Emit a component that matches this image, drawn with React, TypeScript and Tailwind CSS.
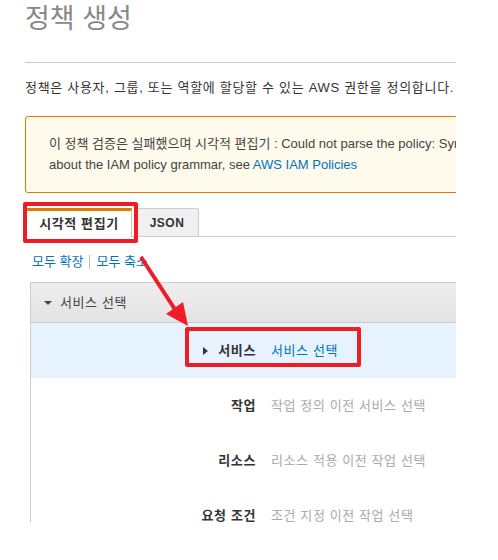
const font = { fontFamily: '"Liberation Sans", "Noto Sans CJK KR", sans-serif' };

const rows = [
  { label: "작업", value: "작업 정의 이전 서비스 선택" },
  { label: "리소스", value: "리소스 적용 이전 작업 선택" },
  { label: "요청 조건", value: "조건 지정 이전 작업 선택" },
];

export default function App() {
  return (
    <div className="w-[498px] h-[560px] bg-white" style={font}>
      <div className="relative w-[456px] h-[522px] overflow-hidden">
        <div className="w-[900px] pl-[25px]">
          <h1 className="h-[38px] text-[27px] leading-[38px] text-[#888] font-normal">정책 생성</h1>
          <div className="mt-[24px] w-[431px] border-t border-[#cccccc]" />
          <p className="mt-[15px] h-[20px] text-[13px] tracking-[0.7px] leading-[20px] text-[#333] whitespace-nowrap">
            정책은 사용자, 그룹, 또는 역할에 할당할 수 있는 AWS 권한을 정의합니다. 사용자, 그룹, 또는 역할에 정책을 연결하십시오.
          </p>

          <div className="mt-[18px] h-[77px] rounded-[3px] border border-[#e07b00] bg-[#fffbec] pl-[23px] pt-[16px] text-[13px] leading-[21px] text-[#444]">
            <div className="whitespace-nowrap">
              이 정책 검증은 실패했으며 시각적 편집기 : Could not parse the policy: Syntax errors in policy. For more information
            </div>
            <div className="whitespace-nowrap">
              about the IAM policy grammar, see <span className="text-[#0073bb]">AWS IAM Policies</span>
            </div>
          </div>

          <div className="mt-[15px] flex h-[29px] items-end border-b border-[#cccccc] pl-[1px]">
            <div className="relative -mb-px flex h-[29px] w-[106px] items-center justify-center border-x border-t-[3px] border-[#cccccc] border-t-[#e07b00] bg-white text-[13px] tracking-[0.6px] font-bold text-[#333]">
              시각적 편집기
            </div>
            <div className="ml-[3px] flex h-[28px] w-[64px] items-center justify-center rounded-t-[3px] border-x border-t border-[#cccccc] bg-[#f0f0f0] text-[12px] font-bold tracking-[0.5px] text-[#333]">
              JSON
            </div>
          </div>

          <div className="mt-[15px] flex h-[20px] items-center pl-[7px] text-[13px] leading-[20px]">
            <span className="text-[#0073bb]">모두 확장</span>
            <span className="mx-[6px] h-[14px] border-l border-[#bbbbbb]" />
            <span className="text-[#0073bb]">모두 축소</span>
          </div>

          <div className="ml-[5px] mt-[10px] border border-[#cccccc] w-[600px] h-[300px]">
            <div className="flex h-[40px] items-center border-b border-[#cccccc] bg-gradient-to-b from-[#eeeeee] to-[#e3e3e3] pl-[13px] text-[13px] tracking-[0.6px] text-[#444]">
              <span className="mr-[8px] h-0 w-0 border-x-[4px] border-t-[4px] border-x-transparent border-t-[#444]" />
              서비스 선택
            </div>
            <div className="flex h-[55px] items-center bg-[#e6f2fd] text-[13px] tracking-[0.6px]">
              <div className="flex w-[225px] items-center justify-end">
                <span className="mr-[10px] h-0 w-0 border-y-[4px] border-l-[5px] border-y-transparent border-l-[#333]" />
                <span className="font-bold text-[#333]">서비스</span>
              </div>
              <span className="ml-[15px] text-[#0073bb]">서비스 선택</span>
            </div>
            {rows.map((row) => (
              <div key={row.label} className="flex h-[55px] items-center text-[13px] tracking-[0.6px]">
                <div className="w-[225px] text-right font-bold text-[#333]">{row.label}</div>
                <div className="ml-[15px] text-[#aaaaaa]">{row.value}</div>
              </div>
            ))}
          </div>
        </div>

        <div className="absolute left-[23px] top-[202px] h-[41px] w-[115px] rounded-[2px] border-[4px] border-[#ee1c25]" />
        <div className="absolute left-[185px] top-[327px] h-[40px] w-[176px] rounded-[2px] border-[4px] border-[#ee1c25]" />
        <svg className="absolute left-0 top-0" width="456" height="522" viewBox="0 0 456 522">
          <line x1="141" y1="257" x2="176" y2="311" stroke="#ee1c25" strokeWidth="4" />
          <polygon points="188,326 166,314 183,302" fill="#ee1c25" />
        </svg>
      </div>
    </div>
  );
}
